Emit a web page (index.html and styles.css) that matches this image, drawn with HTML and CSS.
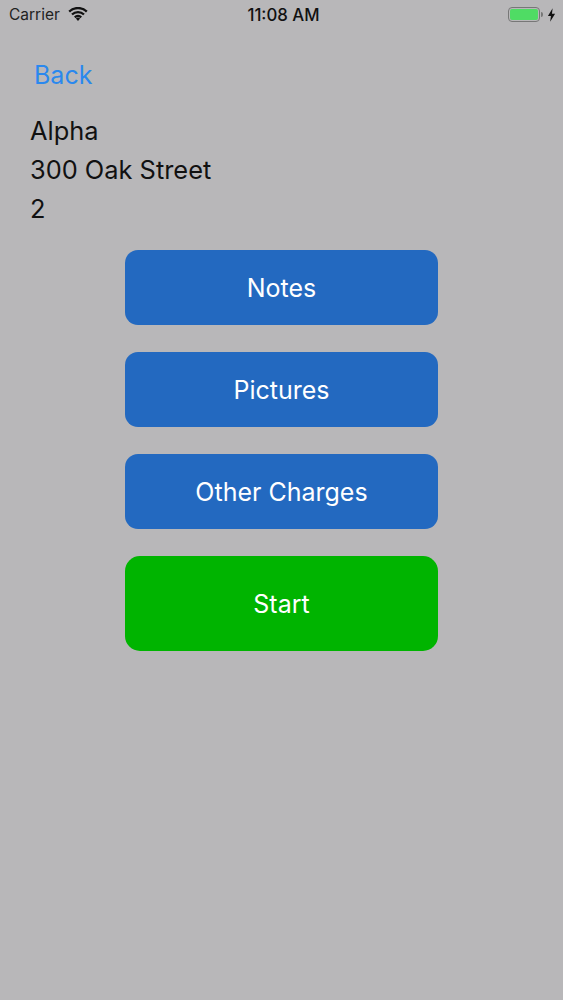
FILE: index.html
```html
<!DOCTYPE html>
<html lang="en">
<head>
<meta charset="utf-8">
<title>Job</title>
<link rel="stylesheet" href="styles.css">
</head>
<body>
<div class="status">
  <div class="status-left">
    <span>Carrier</span>
    <svg class="wifi" viewBox="0 0 20 14" width="20" height="14"><path d="M1.2 4.6a12.6 12.6 0 0 1 17.6 0M4 7.5a8.6 8.6 0 0 1 12 0M6.8 10.3a4.6 4.6 0 0 1 6.4 0" fill="none" stroke="#111" stroke-width="2.3"/><path d="M10 14 7.9 11.6a3 3 0 0 1 4.2 0z" fill="#111"/></svg>
  </div>
  <span class="time">11:08 AM</span>
  <div class="status-right">
    <div class="battery"><div class="battery-fill"></div></div>
    <div class="battery-cap"></div>
    <svg class="bolt" viewBox="0 0 8 12" width="9" height="14"><path d="M5 0 .8 6.8h2.7L2.8 12 7.2 4.9H4.4z" fill="#111"/></svg>
  </div>
</div>
<main class="content">
  <a class="back">Back</a>
  <div class="info">
    <div>Alpha</div>
    <div>300 Oak Street</div>
    <div>2</div>
  </div>
  <div class="actions">
    <button class="btn blue">Notes</button>
    <button class="btn blue">Pictures</button>
    <button class="btn blue">Other Charges</button>
    <button class="btn green">Start</button>
  </div>
</main>
</body>
</html>
```
FILE: styles.css
```css
* { box-sizing: border-box; }
html, body { margin: 0; height: 100%; }
body {
  background: #b8b7b9;
  font-family: Inter, "Liberation Sans", sans-serif;
  color: #111;
  width: 563px;
  height: 1000px;
  overflow: hidden;
}
.status {
  height: 29px;
  padding: 0 7px 0 9px;
  display: grid;
  grid-template-columns: 1fr auto 1fr;
  align-items: center;
  font-size: 15.5px;
  color: #222;
}
.status-left { display: flex; align-items: center; gap: 8px; }
.wifi { margin-top: -2px; }
.time { font-weight: 500; color: #111; font-size: 16.8px; margin-left: 2px; }
.status-right { display: flex; align-items: center; justify-content: flex-end; }
.battery {
  width: 32px;
  height: 15px;
  border: 1.5px solid #777;
  border-radius: 4px;
  padding: 1px;
}
.battery-fill { height: 100%; background: #4fdc64; border-radius: 2px; }
.battery-cap { width: 2px; height: 5px; background: #777; margin-left: 1px; border-radius: 0 2px 2px 0; }
.bolt { margin-left: 4px; }
.content { padding: 29px 0 0 30px; }
.back {
  display: block;
  margin-left: 4px;
  font-size: 25px;
  line-height: 34px;
  color: #2a88ee;
}
.info {
  margin-top: 19px;
  font-size: 25.4px;
  line-height: 39px;
  color: #111;
}
.actions {
  margin: 22px 0 0 95px;
  width: 313px;
  display: flex;
  flex-direction: column;
  gap: 27px;
}
.btn {
  border: 0;
  width: 100%;
  height: 75px;
  border-radius: 13px;
  color: #fff;
  font: inherit;
  font-size: 25px;
  padding: 0;
}
.blue { background: #2369c0; }
.green { background: #00b400; height: 95px; border-radius: 15px; }
```
